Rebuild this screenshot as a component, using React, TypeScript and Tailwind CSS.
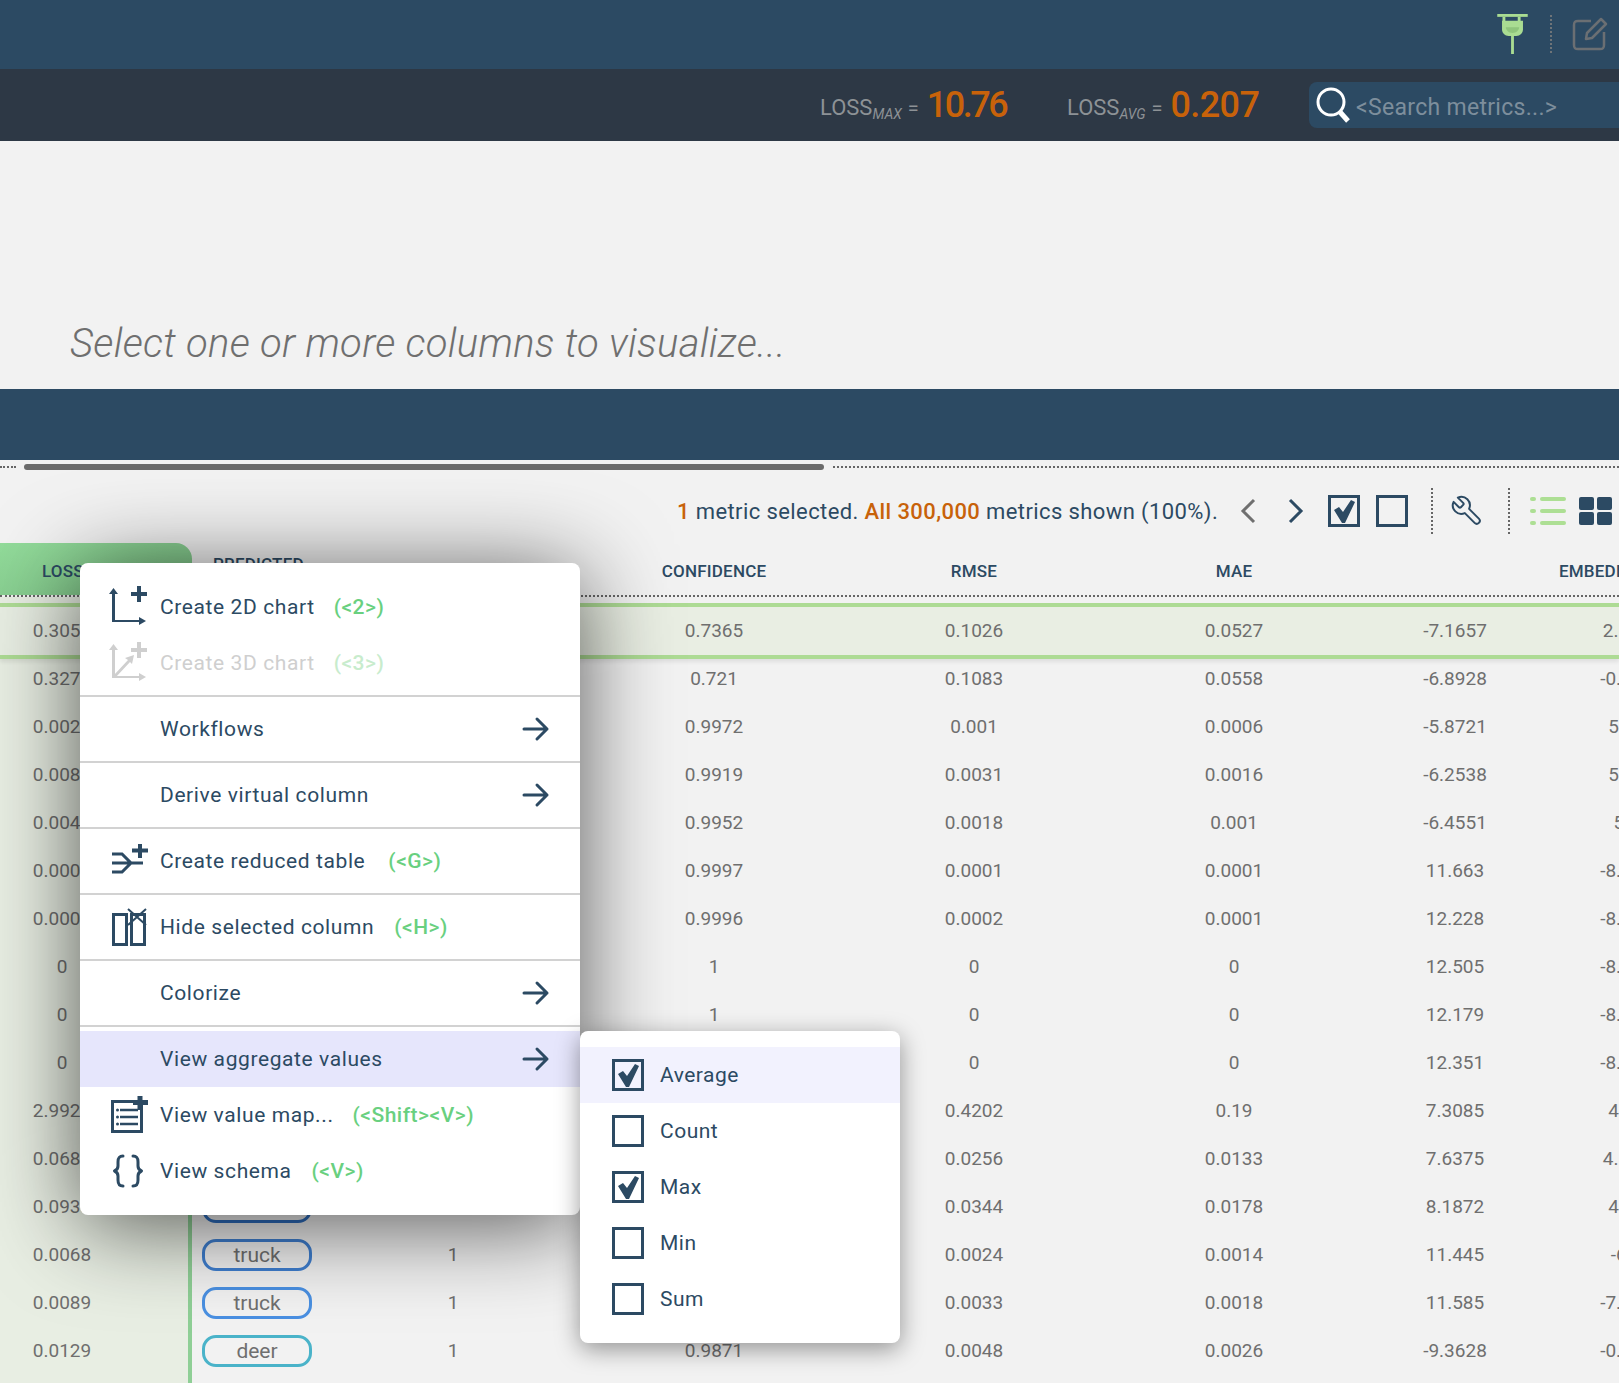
import React from "react";

const NAVY = "#2c4a63";
const COLS = "grid-cols-[192px_130px_262px_260px_260px_260px_182px_172px]";

const rows: [string, string, string, string, string, string, string, string, string][] = [
  ["0.3052", "truck", "#4a90e2", "1", "0.7365", "0.1026", "0.0527", "-7.1657", "2.1843"],
  ["0.3271", "truck", "#4a90e2", "1", "0.721", "0.1083", "0.0558", "-6.8928", "-0.5271"],
  ["0.0028", "truck", "#4a90e2", "1", "0.9972", "0.001", "0.0006", "-5.8721", "5.318"],
  ["0.0081", "truck", "#4a90e2", "1", "0.9919", "0.0031", "0.0016", "-6.2538", "5.127"],
  ["0.0048", "truck", "#4a90e2", "1", "0.9952", "0.0018", "0.001", "-6.4551", "5.61"],
  ["0.0003", "car", "#4a90e2", "1", "0.9997", "0.0001", "0.0001", "11.663", "-8.2214"],
  ["0.0004", "car", "#4a90e2", "1", "0.9996", "0.0002", "0.0001", "12.228", "-8.5061"],
  ["0", "car", "#4a90e2", "1", "1", "0", "0", "12.505", "-8.7742"],
  ["0", "car", "#4a90e2", "1", "1", "0", "0", "12.179", "-8.3315"],
  ["0", "car", "#4a90e2", "1", "1", "0", "0", "12.351", "-8.6098"],
  ["2.9921", "truck", "#4a90e2", "1", "0.5984", "0.4202", "0.19", "7.3085", "4.221"],
  ["0.0684", "truck", "#4a90e2", "1", "0.9339", "0.0256", "0.0133", "7.6375", "4.5106"],
  ["0.0933", "truck", "#2f6fc0", "1", "0.9109", "0.0344", "0.0178", "8.1872", "4.018"],
  ["0.0068", "truck", "#3f7fd0", "1", "0.9932", "0.0024", "0.0014", "11.445", "-6.21"],
  ["0.0089", "truck", "#4a90e2", "1", "0.9911", "0.0033", "0.0018", "11.585", "-7.1123"],
  ["0.0129", "deer", "#4ab3c9", "1", "0.9871", "0.0048", "0.0026", "-9.3628", "-0.7741"],
];

function Arrow() {
  return (
    <svg width="28" height="26" viewBox="0 0 28 26" fill="none" stroke={NAVY} strokeWidth="3" strokeLinecap="round" strokeLinejoin="round">
      <path d="M2 13H25M15 3l10 10-10 10" />
    </svg>
  );
}

function Chart2D() {
  return (
    <svg width="40" height="42" viewBox="0 0 40 42" fill={NAVY}>
      <path d="M2 6 6.500 0 11 6H8v26h24v-3l7 4-7 4v-3H5V6z" transform="translate(0 2)" />
      <path d="M24 6h6V0h4v6h6v4h-6v6h-4v-6h-6z" />
    </svg>
  );
}

function Chart3D() {
  return (
    <svg width="40" height="42" viewBox="0 0 40 42" fill="#cfcfcf">
      <path d="M2 6 6.500 0 11 6H8v26h24v-3l7 4-7 4v-3H5V6z" transform="translate(0 2)" />
      <path d="M24 6h6V0h4v6h6v4h-6v6h-4v-6h-6z" />
      <path d="M7 33 21 18l-3-2 9-3-2 9-2-2L9 35z" />
    </svg>
  );
}

function Reduced() {
  return (
    <svg width="38" height="34" viewBox="0 0 38 34" fill="none" stroke={NAVY} className="ml-[6px]">
      <path d="M1 10h10l9 9-9 9H1M1 19h31" strokeWidth="3" />
      <path d="M21 6.500h16M29 0v14" strokeWidth="4" />
    </svg>
  );
}

function HideCol() {
  return (
    <svg width="36" height="38" viewBox="0 0 36 38" fill="none" stroke={NAVY} className="ml-[6px]">
      <rect x="1.500" y="6.500" width="13" height="30" strokeWidth="3" />
      <rect x="19.500" y="6.500" width="13" height="30" strokeWidth="3" />
      <path d="M16 1 34 17M34 1 16 17" strokeWidth="2" />
    </svg>
  );
}

function ValueMap() {
  return (
    <svg width="38" height="38" viewBox="0 0 38 38" fill="none" stroke={NAVY} className="ml-[6px]">
      <rect x="1.500" y="5.500" width="29" height="30" strokeWidth="3" />
      <path d="M9 14h18M9 21h18M9 28h18" strokeWidth="2.500" />
      <circle cx="6.500" cy="14" r="1.500" fill={NAVY} stroke="none" />
      <circle cx="6.500" cy="21" r="1.500" fill={NAVY} stroke="none" />
      <circle cx="6.500" cy="28" r="1.500" fill={NAVY} stroke="none" />
      <path d="M22 6.500h15M29 0v14" strokeWidth="5" />
    </svg>
  );
}

function Braces() {
  return (
    <svg width="32" height="34" viewBox="0 0 32 34" fill="none" stroke={NAVY} strokeWidth="3" strokeLinecap="round" strokeLinejoin="round" className="ml-[2px]">
      <path d="M11 2C7 2 6 4 6 8v4c0 3-1 4-3.500 5C5 18 6 19 6 22v4c0 4 1 6 5 6" />
      <path d="M21 2c4 0 5 2 5 6v4c0 3 1 4 3.500 5-2.500 1-3.500 2-3.500 5v4c0 4-1 6-5 6" />
    </svg>
  );
}

function Check({ on }: { on: boolean }) {
  return (
    <span className="flex h-8 w-8 shrink-0 items-center justify-center border-[3px] border-[#2c4a63]">
      {on && (
        <svg width="24" height="23" viewBox="0 0 24 23" fill={NAVY}>
          <path d="M2 10l5-3 4 5L19 0l4 2-10 21h-3z" />
        </svg>
      )}
    </span>
  );
}

function MenuRow({
  icon,
  label,
  keyHint,
  gap,
  arrow,
  active,
  disabled,
}: {
  icon?: React.ReactNode;
  label: string;
  keyHint?: string;
  gap?: string;
  arrow?: boolean;
  active?: boolean;
  disabled?: boolean;
}) {
  return (
    <div className={`flex h-14 items-center ${active ? "bg-[#e6e6fc]" : ""}`}>
      <span className="flex w-20 shrink-0 justify-center pl-[14px]">{icon}</span>
      <span className={`pt-[2px] text-[21px] tracking-[0.6px] ${disabled ? "text-[#cfcfcf]" : "text-[#2c4a63]"}`}>{label}</span>
      {keyHint && (
        <span className={`pt-[2px] text-[21px] font-medium tracking-[0.5px] ${gap} ${disabled ? "text-[#c8eccd]" : "text-[#69d07f]"}`}>{keyHint}</span>
      )}
      {arrow && (
        <span className="ml-auto mr-[30px]">
          <Arrow />
        </span>
      )}
    </div>
  );
}

function Rule() {
  return <div className="my-1 h-0.5 bg-[#d2d2d2]" />;
}

export default function App() {
  return (
    <div className="relative h-[1383px] w-[1619px] overflow-hidden bg-[#f2f2f2] font-['Roboto',sans-serif]">
      <header className="flex h-[69px] items-center justify-end bg-[#2c4a63] pb-[1px]">
        <svg width="31" height="40" viewBox="0 0 32 42" fill="none" className="mr-[22px] mt-[-1px]">
          <path d="M0 1.500h32" stroke="#a9dc92" strokeWidth="3" />
          <path d="M7 3v5M23 3v5" stroke="#a9dc92" strokeWidth="3" />
          <path d="M5 7h22v9c0 4-3 7-7 7h-8c-4 0-7-3-7-7z" fill="#a9dc92" />
          <path d="M9 14h14c0 3-3 6-7 6s-7-3-7-6z" fill="#8fc57c" />
          <path d="M16 20v22" stroke="#a9dc92" strokeWidth="3" />
        </svg>
        <span className="mr-[20px] h-[38px] border-l-2 border-dotted border-[#6f7478]" />
        <svg width="36" height="34" viewBox="0 0 36 34" fill="none" stroke="#6b6f73" strokeWidth="2.500" strokeLinejoin="round" className="mr-[11px]">
          <path d="M19 4H6C3 4 2 5 2 8v20c0 3 1 4 4 4h22c3 0 4-1 4-4V15" />
          <path d="M29 2l5 5-14 14-6 1 1-6z" />
        </svg>
      </header>

      <div className="flex h-[72px] items-center bg-[#2d3845] pl-[820px]">
        <div className="flex w-[247px] items-baseline text-[#8d9296]">
          <span className="text-[22px] [transform:translateY(-2px)]">LOSS</span>
          <span className="text-[14px] italic [transform:translateY(2px)]">MAX</span>
          <span className="ml-1.5 text-[20px] [transform:translateY(-2px)]">=</span>
          <span className="ml-2 text-[36px] font-medium tracking-[-2.500px] text-[#c8620a]">10.76</span>
        </div>
        <div className="flex w-[242px] items-baseline text-[#8d9296]">
          <span className="text-[22px] [transform:translateY(-2px)]">LOSS</span>
          <span className="text-[14px] italic [transform:translateY(2px)]">AVG</span>
          <span className="ml-1.5 text-[20px] [transform:translateY(-2px)]">=</span>
          <span className="ml-2 text-[36px] font-medium tracking-[-0.600px] text-[#c8620a]">0.207</span>
        </div>
        <div className="flex h-[46px] flex-1 items-center rounded-l-lg bg-[#2c4a63] pl-[6px]">
          <svg width="36" height="38" viewBox="0 0 36 38" fill="none" stroke="#ffffff">
            <circle cx="16" cy="16" r="13" strokeWidth="3" />
            <path d="M25 26l8 9" strokeWidth="5" />
          </svg>
          <span className="ml-[5px] pt-[7px] text-[23px] tracking-[0.3px] text-[#7d8e9c]">&lt;Search metrics...&gt;</span>
        </div>
      </div>

      <div className="flex h-[248px] items-end pb-[15px] pl-[70px]">
        <span className="text-[40px] font-light italic tracking-[0.3px] text-[#6f6f6f]">Select one or more columns to visualize...</span>
      </div>

      <div className="h-[71px] bg-[#2c4a63]" />

      <div className="flex h-[16px] items-center pb-[2px]">
        <span className="w-4 border-t-2 border-dotted border-[#666666]" />
        <span className="ml-2 h-1.5 w-[800px] rounded-full bg-[#6b6b6b]" />
        <span className="ml-[9px] flex-1 border-t-2 border-dotted border-[#666666]" />
      </div>

      <div className="flex h-[67px] items-center pl-[677px] pt-[3px]">
        <span className="w-[549px] pt-px text-[22px] tracking-[0.4px] text-[#2c4a63]">
          <b className="font-medium text-[#c8620a]">1</b> metric selected. <b className="font-medium text-[#c8620a]">All 300,000</b> metrics shown (100%).
        </span>
        <svg width="20" height="28" viewBox="0 0 20 28" fill="none" stroke="#6f6f6f" strokeWidth="3" className="ml-[12px]">
          <path d="M16 3 5 14l11 11" />
        </svg>
        <svg width="20" height="28" viewBox="0 0 20 28" fill="none" stroke="#2c4a63" strokeWidth="3" className="ml-[28px]">
          <path d="M4 3l11 11L4 25" />
        </svg>
        <span className="ml-[22px]">
          <Check on />
        </span>
        <span className="ml-4">
          <Check on={false} />
        </span>
        <span className="ml-[23px] h-[46px] border-l-2 border-dotted border-[#666666]" />
        <svg width="34" height="34" viewBox="0 0 24 24" fill="none" stroke="#2c4a63" strokeWidth="1.400" strokeLinecap="round" strokeLinejoin="round" className="ml-[17px] -scale-x-100">
          <path d="M14.700 6.300a1 1 0 0 0 0 1.400l1.600 1.600a1 1 0 0 0 1.400 0l3.770-3.770a6 6 0 0 1-7.940 7.940l-6.910 6.910a2.120 2.120 0 0 1-3-3l6.910-6.910a6 6 0 0 1 7.940-7.940l-3.760 3.760z" />
        </svg>
        <span className="ml-[24px] h-[46px] border-l-2 border-dotted border-[#666666]" />
        <svg width="36" height="30" viewBox="0 0 36 30" fill="#addf94" className="ml-[20px]">
          <rect x="0" y="1" width="6" height="4" rx="2" />
          <rect x="10" y="1" width="26" height="4" rx="2" />
          <rect x="0" y="13" width="6" height="4" rx="2" />
          <rect x="10" y="13" width="26" height="4" rx="2" />
          <rect x="0" y="25" width="6" height="4" rx="2" />
          <rect x="10" y="25" width="26" height="4" rx="2" />
        </svg>
        <svg width="33" height="28" viewBox="0 0 33 28" fill={NAVY} className="ml-[13px]">
          <rect x="0" y="0" width="15" height="13" rx="2" />
          <rect x="18" y="0" width="15" height="13" rx="2" />
          <rect x="0" y="15" width="15" height="13" rx="2" />
          <rect x="18" y="15" width="15" height="13" rx="2" />
        </svg>
      </div>

      <div className={`grid h-[54px] border-b-2 border-dotted border-[#666666] text-[17px] font-medium tracking-[0.2px] text-[#2c4a63] ${COLS}`}>
        <div className="flex items-center rounded-tr-[16px] bg-gradient-to-br from-[#92db9a] to-[#7fc488] pl-[42px] pt-[5px]">LOSS</div>
        <div className="pl-[21px] pt-[12px] leading-[18px]">PREDICTED CLASS</div>
        <div />
        <div className="flex items-center justify-center pt-[5px]">CONFIDENCE</div>
        <div className="flex items-center justify-center pt-[5px]">RMSE</div>
        <div className="flex items-center justify-center pt-[5px]">MAE</div>
        <div />
        <div className="flex items-center whitespace-nowrap pl-[13px] pt-[5px]">EMBEDDING_X</div>
      </div>
      <div className="h-[6px] w-[192px] border-r-4 border-[#8fcf96] bg-[#e8eee3]" />

      <div className="text-[19px] text-[#6f6f6f]">
        {rows.map((r, i) => (
          <div
            key={i}
            className={`grid items-stretch ${COLS} ${
              i === 0
                ? "relative z-10 mb-[-4px] h-14 border-y-4 border-[#addb94] bg-[#e9eee3] shadow-[0_3px_4px_rgba(0,0,0,0.08)]"
                : "h-12"
            }`}
          >
            <div className={`flex items-center bg-[#e8eee3] ${i === 0 ? "" : "border-r-4 border-[#8fcf96]"}`}>
              <span className="w-[124px] text-center">{r[0]}</span>
            </div>
            <div className="flex items-center pl-[10px]">
              <span
                style={{ borderColor: r[2] }}
                className="flex h-8 w-[110px] items-center justify-center rounded-[14px] border-[3.500px] text-[21px] leading-none"
              >
                {r[1]}
              </span>
            </div>
            <div className="flex items-center justify-center">{r[3]}</div>
            <div className="flex items-center justify-center">{r[4]}</div>
            <div className="flex items-center justify-center">{r[5]}</div>
            <div className="flex items-center justify-center">{r[6]}</div>
            <div className="flex items-center justify-center">{r[7]}</div>
            <div className="flex items-center justify-center">{r[8]}</div>
          </div>
        ))}
        <div className="h-12 w-[192px] border-r-4 border-[#8fcf96] bg-[#e8eee3]" />
      </div>

      <div className="absolute left-[80px] top-[563px] z-20 w-[500px] rounded-lg bg-white py-4 shadow-[0_10px_90px_rgba(0,0,0,0.65)]">
        <MenuRow icon={<Chart2D />} label="Create 2D chart" keyHint="(<2>)" gap="ml-[19px]" />
        <MenuRow icon={<Chart3D />} label="Create 3D chart" keyHint="(<3>)" gap="ml-[19px]" disabled />
        <Rule />
        <MenuRow label="Workflows" arrow />
        <Rule />
        <MenuRow label="Derive virtual column" arrow />
        <Rule />
        <MenuRow icon={<Reduced />} label="Create reduced table" keyHint="(<G>)" gap="ml-[23px]" />
        <Rule />
        <MenuRow icon={<HideCol />} label="Hide selected column" keyHint="(<H>)" gap="ml-[20px]" />
        <Rule />
        <MenuRow label="Colorize" arrow />
        <Rule />
        <MenuRow label="View aggregate values" arrow active />
        <MenuRow icon={<ValueMap />} label="View value map..." keyHint="(<Shift><V>)" gap="ml-[19px]" />
        <MenuRow icon={<Braces />} label="View schema" keyHint="(<V>)" gap="ml-[20px]" />
      </div>

      <div className="absolute left-[580px] top-[1031px] z-30 w-[320px] rounded-lg bg-white py-4 shadow-[0_6px_24px_rgba(0,0,0,0.4)]">
        {[
          ["Average", true],
          ["Count", false],
          ["Max", true],
          ["Min", false],
          ["Sum", false],
        ].map(([label, on], i) => (
          <div key={String(label)} className={`flex h-14 items-center pl-8 ${i === 0 ? "bg-[#f2f2fe]" : ""}`}>
            <Check on={Boolean(on)} />
            <span className="ml-4 pt-[2px] text-[21px] tracking-[0.5px] text-[#2c4a63]">{String(label)}</span>
          </div>
        ))}
      </div>
    </div>
  );
}
